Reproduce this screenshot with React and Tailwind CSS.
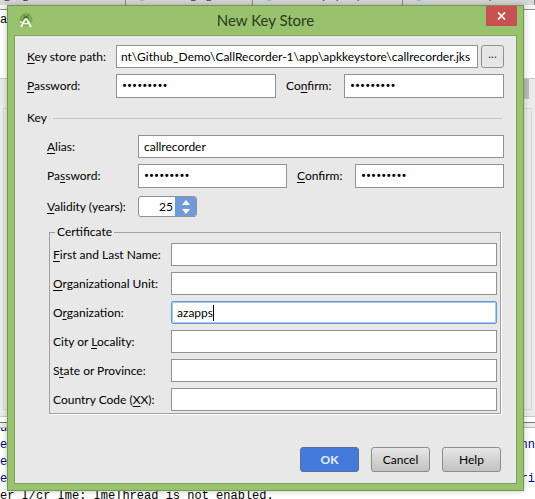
import React from "react";

const inputBase =
  "block min-w-0 border border-[#919191] bg-white text-black outline-none rounded-none";

function Label({ htmlFor, text, hot, className = "" }) {
  return (
    <label htmlFor={htmlFor} className={"shrink-0 whitespace-nowrap " + className}>
      {text.slice(0, hot)}
      <span className="underline underline-offset-2">{text[hot]}</span>
      {text.slice(hot + 1)}
    </label>
  );
}

function Password({ id, className = "" }) {
  return (
    <input
      id={id}
      type="password"
      defaultValue="recorder1"
      className={inputBase + " h-6 px-[5px] text-[15px] font-[Roboto] " + className}
    />
  );
}

const certificate = [
  { id: "name", text: "First and Last Name:", hot: 0 },
  { id: "unit", text: "Organizational Unit:", hot: 0 },
  { id: "org", text: "Organization:", hot: 1, value: "azapps", active: true },
  { id: "city", text: "City or Locality:", hot: 8 },
  { id: "state", text: "State or Province:", hot: 1 },
  { id: "country", text: "Country Code (XX):", hot: 14 },
];

const tabs = [
  { width: "w-[126px] pl-1", dot: "hidden", text: "g    g" },
  { width: "w-[127px] pl-3", dot: "bg-[#99c26e]", text: "g   g" },
  { width: "w-[150px] pl-3", dot: "bg-[#74c3dd]", text: "p  y     y" },
  { width: "w-[132px] pl-3", dot: "bg-[#74c3dd]", text: "y" },
];

const buttonBase =
  "flex h-[25px] w-[59px] items-center justify-center rounded-[3px] border";

function Backdrop() {
  return (
    <div className="flex h-screen flex-col overflow-hidden bg-[#ebebeb] font-['Liberation_Mono',monospace] text-[12px] text-[#000080]">
      <div className="flex h-[5px] shrink-0 items-end overflow-hidden bg-[#d6d6d6] text-[#333333]">
        {tabs.map((tab) => (
          <div key={tab.text} className={"flex h-4 shrink-0 items-end justify-between border-r border-[#8a8a8a] pr-10 pb-1 font-['Lato',sans-serif] leading-3 whitespace-pre " + tab.width}>
            <span className={"size-2 shrink-0 rounded-full " + tab.dot} />
            <span>{tab.text}</span>
          </div>
        ))}
      </div>
      <div className="h-1 shrink-0 bg-[#f4f4f4]" />
      <div className="h-[70px] shrink-0 border-t border-b border-t-[#8f8f8f] border-b-[#c9c9c9] bg-white pt-px text-black">
        a
      </div>
      <div className="flex h-5 shrink-0 justify-end pr-[6px]">
        <span className="w-3 bg-[#bcbcbc]" />
      </div>
      <div className="mx-[3px] mt-[9px] h-[302px] shrink-0 border border-[#d8d8d8]" />
      <div className="mt-[6px] h-[6px] shrink-0 border-t border-[#c9c9c9] bg-white" />
      <div className="h-[6px] shrink-0 border-t border-b border-t-[#777777] border-b-[#bcbcbc]" />
      <div className="flex-1 bg-white leading-[17px]">
        <div className="flex h-[9px] items-end overflow-hidden">u</div>
        <div className="flex justify-between"><span>e</span><span>onn</span></div>
        <div>e</div>
        <div className="flex justify-between"><span>e</span><span>ori</span></div>
        <div className="whitespace-pre text-black">er I/cr Ime: ImeThread is not enabled.</div>
      </div>
    </div>
  );
}

function Logo() {
  return (
    <svg width="14" height="15" viewBox="0 0 14 15" aria-hidden="true">
      <circle cx="7" cy="6.500" r="6.500" fill="#76b043" />
      <path d="M4.500 6a2.500 3 0 0 1 5 0v1.500h-5z" fill="#56624f" />
      <path d="M4.800 1.800l1 1.700M9.200 1.800l-1 1.700" stroke="#56624f" strokeWidth=".8" />
      <path d="M6.300 6L2 14M7.700 6L12 14" fill="none" stroke="#f4f4f4" strokeWidth="1.800" />
      <path d="M1.300 8.500Q5.500 12.500 11 9.300" fill="none" stroke="#f4f4f4" strokeWidth="1.500" />
      <circle cx="7" cy="6" r="1" fill="#f4f4f4" />
    </svg>
  );
}

export default function App() {
  return (
    <div className="relative min-h-screen overflow-hidden">
      <Backdrop />
      <div
        role="dialog"
        aria-labelledby="title"
        className="absolute top-[5px] right-[11px] left-[7px] flex flex-col border border-[#75974f] bg-[#99c26e] px-[6px] pb-[6px] font-['Lato','Open_Sans',sans-serif] text-[12px] leading-4 text-black shadow-[0_0_6px_rgba(0,0,0,0.25)]"
      >
        <header className="flex h-[29px] items-start justify-between">
          <span className="w-[31px] pt-[7px] pl-[5px]"><Logo /></span>
          <h1 id="title" className="pt-1 text-[15px] leading-5 text-[#2d3a20]">New Key Store</h1>
          <button aria-label="Close" className="flex h-5 w-[31px] items-center justify-center bg-[#c75050]">
            <svg width="9" height="8" viewBox="0 0 9 8"><path d="M1 .5l7 7M8 .5l-7 7" stroke="#fff" strokeWidth="1.700" /></svg>
          </button>
        </header>
        <main className="border border-[#7f9f5d] bg-[#e8e8e8] px-3 pt-[9px] pb-[11px]">
          <div className="flex items-center">
            <Label htmlFor="path" text="Key store path:" hot={0} className="w-[89px]" />
            <input id="path" defaultValue="nt\Github_Demo\CallRecorder-1\app\apkkeystore\callrecorder.jks" className={inputBase + " h-[23px] flex-1 pl-1"} />
            <button aria-label="Browse" className="ml-[3px] flex h-[23px] w-[23px] justify-center rounded-[3px] border border-[#919191] bg-[#e6e6e6] text-[#333333]">...</button>
          </div>
          <div className="mt-[6px] flex items-center">
            <Label htmlFor="storePass" text="Password:" hot={0} className="w-[89px]" />
            <Password id="storePass" className="flex-1" />
            <Label htmlFor="storeConfirm" text="Confirm:" hot={2} className="w-[68px] pl-[10px]" />
            <Password id="storeConfirm" className="flex-1" />
          </div>
          <div className="mt-3 flex items-center gap-[6px]">
            <h2>Key</h2>
            <span className="mr-[2px] h-px flex-1 bg-[#c9c9c9]" />
          </div>
          <section className="pl-5">
            <div className="mt-[9px] flex items-center">
              <Label htmlFor="alias" text="Alias:" hot={0} className="w-[91px]" />
              <input id="alias" defaultValue="callrecorder" className={inputBase + " h-[23px] flex-1 pl-[5px]"} />
            </div>
            <div className="mt-[6px] flex items-center">
              <Label htmlFor="keyPass" text="Password:" hot={2} className="w-[91px]" />
              <Password id="keyPass" className="flex-1" />
              <Label htmlFor="keyConfirm" text="Confirm:" hot={0} className="w-[68px] pl-[10px]" />
              <Password id="keyConfirm" className="flex-1" />
            </div>
            <div className="mt-2 flex items-center">
              <Label htmlFor="years" text="Validity (years):" hot={0} className="w-[91px]" />
              <div className="flex h-[21px] w-[59px] overflow-hidden rounded-[3px] border border-[#919191] bg-white">
                <input id="years" defaultValue="25" className="min-w-0 flex-1 pr-[2px] text-right outline-none" />
                <div className="flex w-[21px] flex-col items-center justify-center gap-1 bg-[#6f9ad8]">
                  <button aria-label="More years" className="block"><svg className="block" width="8" height="5"><path d="M0 5L4 0l4 5z" fill="#fff" /></svg></button>
                  <button aria-label="Fewer years" className="block"><svg className="block" width="8" height="5"><path d="M0 0l4 5 4-5z" fill="#fff" /></svg></button>
                </div>
              </div>
            </div>
            <fieldset className="mt-[7px] mr-[3px] ml-[2px] border border-[#a0a0a0] px-[3px] pt-[3px] pb-[2px] shadow-[1px_1px_0_#fff]">
              <legend className="ml-[2px] px-[2px]">Certificate</legend>
              <div className="flex flex-col gap-[6px]">
                {certificate.map((row) => (
                  <div key={row.id} className="flex items-center">
                    <Label htmlFor={row.id} text={row.text} hot={row.hot} className="w-[118px]" />
                    {row.active ? (
                      <div className="flex h-[23px] flex-1 items-center rounded-[2px] border border-[#5c9ae0] bg-white pl-[5px] ring-1 ring-[#a9c9ee] ring-inset">
                        <input id={row.id} defaultValue={row.value} className="field-sizing-content outline-none" />
                        <span className="h-4 w-px bg-black" />
                      </div>
                    ) : (
                      <input id={row.id} className={inputBase + " h-[23px] flex-1 pl-[5px]"} />
                    )}
                  </div>
                ))}
              </div>
            </fieldset>
          </section>
          <footer className="mt-[33px] mr-[3px] flex justify-end gap-3">
            <button className={buttonBase + " border-[#5a6f92] bg-[#447bdb] font-bold text-[#e6eefb]"}>OK</button>
            <button className={buttonBase + " border-[#8c8c8c] bg-linear-to-b from-[#e6e6e6] to-[#c2c2c2]"}>Cancel</button>
            <button className={buttonBase + " border-[#8c8c8c] bg-linear-to-b from-[#e6e6e6] to-[#c2c2c2]"}>Help</button>
          </footer>
        </main>
      </div>
    </div>
  );
}
